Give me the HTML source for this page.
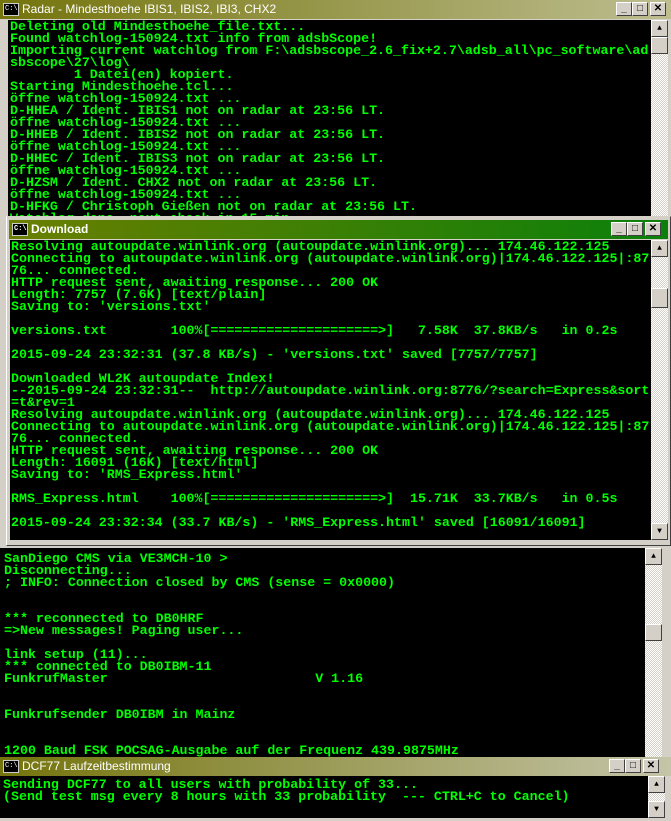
<!DOCTYPE html>
<html><head><meta charset="utf-8"><style>
*{margin:0;padding:0;box-sizing:border-box}
body{width:671px;height:821px;overflow:hidden;background:#d4d0c8;position:relative;font-family:"Liberation Mono",monospace}
.a{position:absolute}
.con{position:absolute;background:#000;color:#00ff00;font-family:"Liberation Mono",monospace;font-weight:bold;font-size:13.3px;line-height:12px;white-space:pre;overflow:hidden;letter-spacing:0}
.tb{position:absolute;height:19px;font-family:"Liberation Sans",sans-serif;font-size:12px;color:#fff;line-height:19px;padding-left:22px}
.ic{position:absolute;left:3px;top:3px;width:16px;height:13px;background:#000;border:1px solid #ccc;font-size:7px;line-height:10px;color:#fff;padding-left:1px;font-family:"Liberation Mono",monospace}
.btn{position:absolute;width:16px;height:14px;background:#d4d0c8;border:1px solid;border-color:#fff #404040 #404040 #fff;font-size:10px;line-height:12px;text-align:center;color:#000;font-family:"Liberation Sans",sans-serif;font-weight:bold}
.sb{position:absolute;width:17px;background:repeating-conic-gradient(#fff 0 25%,#d4d0c8 0 50%) 0 0/2px 2px}
.sbb{position:absolute;left:0;width:17px;height:17px;background:#d4d0c8;border:1px solid;border-color:#fff #404040 #404040 #fff;font-size:8px;text-align:center;line-height:15px;color:#000}
</style></head><body>
<!-- Radar -->
<div class="tb" style="left:0;top:0;width:671px;background:linear-gradient(90deg,#74740c,#bdbd90)"><div class="ic">C:\</div>Radar - Mindesthoehe IBIS1, IBIS2, IBI3, CHX2
<div class="btn" style="left:616px;top:2px">_</div><div class="btn" style="left:632px;top:2px">□</div><div class="btn" style="left:650px;top:2px">✕</div></div>
<div class="con" style="left:8px;top:20px;width:643px;height:196px;padding-left:2px;padding-top:1px">Deleting old Mindesthoehe_file.txt...
Found watchlog-150924.txt info from adsbScope!
Importing current watchlog from F:\adsbscope_2.6_fix+2.7\adsb_all\pc_software\ad
sbscope\27\log\
        1 Datei(en) kopiert.
Starting Mindesthoehe.tcl...
öffne watchlog-150924.txt ...
D-HHEA / Ident. IBIS1 not on radar at 23:56 LT.
öffne watchlog-150924.txt ...
D-HHEB / Ident. IBIS2 not on radar at 23:56 LT.
öffne watchlog-150924.txt ...
D-HHEC / Ident. IBIS3 not on radar at 23:56 LT.
öffne watchlog-150924.txt ...
D-HZSM / Ident. CHX2 not on radar at 23:56 LT.
öffne watchlog-150924.txt ...
D-HFKG / Christoph Gießen not on radar at 23:56 LT.
Watchlog done, next check in 15 min</div>
<div class="sb" style="left:651px;top:20px;height:196px"><div class="sbb" style="top:0">▲</div><div class="sbb" style="top:17px"></div></div>
<!-- Download -->
<div class="a" style="left:6px;top:216px;width:665px;height:330px;background:#d4d0c8;border:1px solid;border-color:#d4d0c8 #404040 #404040 #fff"></div>
<div class="tb" style="left:9px;top:220px;width:659px;background:linear-gradient(90deg,#6a7f00,#0a800a);font-weight:bold"><div class="ic">C:\</div>Download
<div class="btn" style="left:602px;top:2px">_</div><div class="btn" style="left:618px;top:2px">□</div><div class="btn" style="left:636px;top:2px">✕</div></div>
<div class="con" style="left:10px;top:240px;width:641px;height:300px;padding-left:1px;padding-top:1px">Resolving autoupdate.winlink.org (autoupdate.winlink.org)... 174.46.122.125
Connecting to autoupdate.winlink.org (autoupdate.winlink.org)|174.46.122.125|:87
76... connected.
HTTP request sent, awaiting response... 200 OK
Length: 7757 (7.6K) [text/plain]
Saving to: 'versions.txt'

versions.txt        100%[=====================>]   7.58K  37.8KB/s   in 0.2s

2015-09-24 23:32:31 (37.8 KB/s) - 'versions.txt' saved [7757/7757]

Downloaded WL2K autoupdate Index!
--2015-09-24 23:32:31--  http://autoupdate.winlink.org:8776/?search=Express&sort
=t&rev=1
Resolving autoupdate.winlink.org (autoupdate.winlink.org)... 174.46.122.125
Connecting to autoupdate.winlink.org (autoupdate.winlink.org)|174.46.122.125|:87
76... connected.
HTTP request sent, awaiting response... 200 OK
Length: 16091 (16K) [text/html]
Saving to: 'RMS_Express.html'

RMS_Express.html    100%[=====================>]  15.71K  33.7KB/s   in 0.5s

2015-09-24 23:32:34 (33.7 KB/s) - 'RMS_Express.html' saved [16091/16091]</div>
<div class="sb" style="left:651px;top:240px;height:300px"><div class="sbb" style="top:0">▲</div><div class="sbb" style="top:48px;height:20px"></div><div class="sbb" style="top:283px">▼</div></div>
<!-- third -->
<div class="a" style="left:0;top:546px;width:671px;height:212px;background:#d4d0c8"></div>
<div class="con" style="left:0;top:548px;width:645px;height:209px;padding-left:4px;padding-top:5px">SanDiego CMS via VE3MCH-10 >
Disconnecting...
; INFO: Connection closed by CMS (sense = 0x0000)


*** reconnected to DB0HRF
=>New messages! Paging user...

link setup (11)...
*** connected to DB0IBM-11
FunkrufMaster                          V 1.16


Funkrufsender DB0IBM in Mainz


1200 Baud FSK POCSAG-Ausgabe auf der Frequenz 439.9875MHz</div>
<div class="sb" style="left:645px;top:548px;height:209px"><div class="sbb" style="top:0">▲</div><div class="sbb" style="top:76px"></div></div>
<!-- DCF77 -->
<div class="tb" style="left:0;top:757px;width:671px;background:linear-gradient(90deg,#74740c,#c4c4a8)"><div class="ic">C:\</div>DCF77 Laufzeitbestimmung
<div class="btn" style="left:609px;top:2px">_</div><div class="btn" style="left:625px;top:2px">□</div><div class="btn" style="left:643px;top:2px">✕</div></div>
<div class="con" style="left:0;top:776px;width:648px;height:42px;padding-left:3px;padding-top:3px">Sending DCF77 to all users with probability of 33...
(Send test msg every 8 hours with 33 probability  --- CTRL+C to Cancel)</div>
<div class="sb" style="left:648px;top:776px;height:42px"><div class="sbb" style="top:0">▲</div><div class="sbb" style="top:25px">▼</div></div>
</body></html>
